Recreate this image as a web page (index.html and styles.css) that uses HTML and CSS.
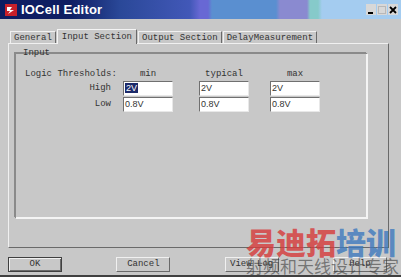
FILE: index.html
```html
<!DOCTYPE html>
<html>
<head>
<meta charset="utf-8">
<link rel="stylesheet" href="styles.css">
</head>
<body>
<div class="window">
  <div class="titlebar">
    <svg class="appicon" width="12" height="12" viewBox="0 0 12 12">
      <rect x="0" y="0" width="12" height="12" fill="#c8202a"/>
      <path d="M2 3 L7 3 L5 6 L9 6 L3 10 L5 7 L2 7 Z" fill="#ffffff"/>
    </svg>
    <span class="title">IOCell Editor</span>
    <div class="controls">
      <span class="ctl"><svg width="10" height="10" viewBox="0 0 10 10"><rect x="2" y="7" width="5" height="2" fill="#000"/></svg></span>
      <span class="ctl"><svg width="10" height="10" viewBox="0 0 10 10"><rect x="1.5" y="1.5" width="7" height="7" fill="none" stroke="#b8b8b8"/></svg></span>
      <span class="ctl"><svg width="10" height="10" viewBox="0 0 10 10"><path d="M2 2 L8 8 M8 2 L2 8" stroke="#000" stroke-width="1.8"/></svg></span>
    </div>
  </div>
  <div class="body">
    <div class="tabs">
      <div class="tab">General</div>
      <div class="tab active">Input Section</div>
      <div class="tab">Output Section</div>
      <div class="tab">DelayMeasurement</div>
    </div>
    <div class="panel">
      <fieldset class="group">
        <legend>Input</legend>
        <div class="grid">
          <div class="lt">Logic Thresholds:</div>
          <div class="colh">min</div>
          <div class="colh">typical</div>
          <div class="colh">max</div>
          <div class="rowh">High</div>
          <div class="field"><span class="sel">2V</span></div>
          <div class="field">2V</div>
          <div class="field">2V</div>
          <div class="rowh">Low</div>
          <div class="field">0.8V</div>
          <div class="field">0.8V</div>
          <div class="field">0.8V</div>
        </div>
      </fieldset>
    </div>
    <div class="buttons">
      <div class="btn default">OK</div>
      <div class="btn">Cancel</div>
      <div class="btn">View Log</div>
      <div class="btn">Help</div>
    </div>
  </div>
  <div class="watermark">
    <div class="wm1"><span class="red">易迪拓</span><span class="blue">培训</span></div>
    <div class="wm2">射频和天线设计专家</div>
  </div>
</div>
</body>
</html>
```
FILE: styles.css
```css
html, body {
  margin: 0;
  padding: 0;
  background: #c8c8c8;
}
.window {
  position: relative;
  width: 401px;
  height: 277px;
  box-sizing: border-box;
  background: #c8c8c8;
  border-bottom: 2px solid #404040;
  overflow: hidden;
  display: flex;
  flex-direction: column;
}
.titlebar {
  height: 19px;
  flex: none;
  display: flex;
  align-items: center;
  padding-left: 5px;
  box-sizing: border-box;
  background: linear-gradient(to right,
    #0e1d62 0px, #0e1d62 70px, #2a4898 120px, #4258b8 190px,
    #6868d4 200px, #6868d4 208px, #5a8fd0 212px, #5a8fd0 276px,
    #8a8ad0 280px, #8a8ad0 307px, #86caca 310px, #86caca 318px,
    #a4ccf0 322px, #a4ccf0 401px);
}
.appicon {
  flex: none;
}
.title {
  margin-left: 4px;
  color: #ffffff;
  font-family: "Liberation Sans", Arial, sans-serif;
  font-weight: bold;
  font-size: 13px;
  letter-spacing: 0.2px;
}
.controls {
  margin-left: auto;
  margin-right: 3px;
  display: flex;
  gap: 1px;
}
.ctl {
  width: 10px;
  height: 11px;
  background: #d8d8d8;
  display: flex;
  align-items: center;
  justify-content: center;
}
.body {
  flex: 1;
  display: flex;
  flex-direction: column;
  padding: 9px 12px 0 8px;
  font-family: "Liberation Mono", "Courier New", monospace;
  font-size: 9px;
  color: #333333;
}
.tabs {
  display: flex;
  align-items: flex-end;
  height: 15px;
  padding-left: 2px;
}
.tab {
  height: 12px;
  line-height: 12px;
  padding: 0 3px;
  border-left: 1px solid #f0f0f0;
  border-top: 1px solid #f0f0f0;
  border-right: 1px solid #6a6a6a;
  box-sizing: border-box;
  margin-right: 1px;
}
.tab.active {
  height: 15px;
  line-height: 14px;
  padding: 0 4px;
  background: #c8c8c8;
  position: relative;
  margin-bottom: -1px;
  z-index: 1;
  border-top: 1px solid #f4f4f4;
  border-left: 1px solid #f4f4f4;
  border-right: 1px solid #6a6a6a;
}
.panel {
  height: 205px;
  border-top: 1px solid #f0f0f0;
  border-left: 1px solid #f0f0f0;
  border-right: 1px solid #6a6a6a;
  border-bottom: 1px solid #6a6a6a;
  box-sizing: border-box;
  padding: 4px 21px 0 6px;
}
.group {
  margin: 0;
  padding: 8px 0 10px 10px;
  border: none;
  box-shadow: inset 1px 1px 0 #8a8a8a, inset -1px -1px 0 #f4f4f4, 1px 1px 0 #f4f4f4, -1px -1px 0 #8a8a8a;
  height: 170px;
  box-sizing: border-box;
}
.group legend {
  padding: 0 2px;
  margin-left: -4px;
  font-size: 9px;
}
.grid {
  display: grid;
  grid-template-columns: 98px 50px 26px 50px 21px 50px;
  align-items: center;
}
.lt {
  grid-column: 1 / 2;
  white-space: nowrap;
  height: 12px;
  line-height: 12px;
  margin-top: 2px;
}
.colh {
  text-align: center;
  height: 12px;
  line-height: 12px;
  margin-top: 2px;
}
.colh:nth-child(2) { grid-column: 2; }
.colh:nth-child(3) { grid-column: 4; }
.colh:nth-child(4) { grid-column: 6; }
.rowh {
  grid-column: 1;
  text-align: right;
  padding-right: 12px;
  height: 15px;
  line-height: 15px;
  margin-top: 1px;
}
.field {
  height: 15px;
  box-sizing: border-box;
  margin-top: 1px;
  background: #ffffff;
  border-top: 1px solid #707070;
  border-left: 1px solid #707070;
  border-right: 1px solid #e8e8e8;
  border-bottom: 1px solid #e8e8e8;
  font-family: "Liberation Sans", Arial, sans-serif;
  font-size: 9px;
  line-height: 13px;
  padding-left: 1px;
  color: #333;
}
.grid > .field:nth-child(6) { grid-column: 2; }
.grid > .field:nth-child(7) { grid-column: 4; }
.grid > .field:nth-child(8) { grid-column: 6; }
.grid > .field:nth-child(10) { grid-column: 2; }
.grid > .field:nth-child(11) { grid-column: 4; }
.grid > .field:nth-child(12) { grid-column: 6; }
.sel {
  background: #1c2a6a;
  color: #ffffff;
  padding: 0 1px;
}
.buttons {
  display: flex;
  justify-content: space-between;
  margin-top: 9px;
  padding-right: 2px;
}
.btn {
  width: 54px;
  height: 15px;
  box-sizing: border-box;
  text-align: center;
  line-height: 13px;
  background: #c8c8c8;
  border-top: 1px solid #f0f0f0;
  border-left: 1px solid #f0f0f0;
  border-right: 1px solid #6a6a6a;
  border-bottom: 1px solid #6a6a6a;
}
.btn.default {
  outline: 1px solid #404040;
  outline-offset: -1px;
  box-shadow: inset 1px 1px 0 #f0f0f0, inset -1px -1px 0 #6a6a6a;
}
.watermark {
  position: absolute;
  left: 246px;
  top: 224px;
  pointer-events: none;
}
.wm1 {
  font-family: "Noto Sans CJK SC", sans-serif;
  font-weight: 900;
  font-size: 30px;
  line-height: 34px;
  white-space: nowrap;
}
.wm1 .red { color: rgba(214, 60, 60, 0.82); }
.wm1 .blue { color: rgba(60, 120, 190, 0.8); }
.wm2 {
  font-family: "Noto Sans CJK SC", sans-serif;
  font-size: 17px;
  line-height: 20px;
  color: rgba(60, 60, 60, 0.6);
  white-space: nowrap;
  margin-top: -2px;
}
```
